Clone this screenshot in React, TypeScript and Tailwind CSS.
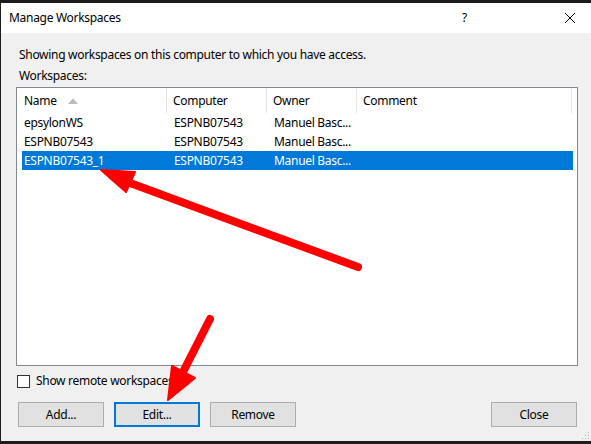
import React from "react";

const font = { fontFamily: '"Noto Sans", "Open Sans", sans-serif' };

function Row({ name, selected }: { name: string; selected?: boolean }) {
  return (
    <div
      className={`flex h-[19px] items-center ${selected ? "bg-[#0078d7] text-white" : "text-black"}`}
    >
      <div className="w-[146px] pl-[2px] whitespace-nowrap">{name}</div>
      <div className="w-[100px] pl-[6px] whitespace-nowrap">ESPNB07543</div>
      <div className="w-[90px] pl-[6px] whitespace-nowrap">Manuel Basc...</div>
      <div className="flex-1"></div>
    </div>
  );
}

function Btn({ label, def }: { label: string; def?: boolean }) {
  return (
    <div
      className={`flex h-[25px] w-[86px] items-center justify-center bg-[#e1e1e1] ${
        def ? "border-2 border-[#0078d7]" : "border border-[#adadad]"
      }`}
    >
      {label}
    </div>
  );
}

export default function App() {
  return (
    <div
      className="relative h-[444px] w-[591px] overflow-hidden bg-[#1b1b1b] pl-[1px] pt-[3px] text-[12px] leading-[16px] tracking-[-0.3px] text-black"
      style={font}
    >
      <div className="flex h-[438px] flex-col bg-[#f0f0f0]">
        {/* Title bar */}
        <div className="flex h-[30px] items-center bg-white pl-[8px]">
          <span className="flex-1">Manage Workspaces</span>
          <span className="mr-[98px] text-[12px]">?</span>
          <svg width="10" height="10" viewBox="0 0 10 10" className="mr-[16px]">
            <path d="M0 0 L10 10 M10 0 L0 10" stroke="#000" strokeWidth="1" />
          </svg>
        </div>
        {/* Body */}
        <div className="flex flex-1 flex-col px-[15px]">
          <div className="mt-[14px] pl-[3px]">Showing workspaces on this computer to which you have access.</div>
          <div className="mt-[5px] pl-[3px]">Workspaces:</div>
          {/* List */}
          <div className="mt-[3px] h-[279px] w-[562px] border border-[#828790] bg-white">
            <div className="flex h-[25px]">
              <div className="relative flex w-[150px] items-center border-r border-[#e5e5e5] pl-[7px]">
                Name
                <svg width="10" height="6" viewBox="0 0 10 6" className="absolute left-[51px] top-[10px]">
                  <path d="M0 6 L5 0.5 L10 6 Z" fill="#bcbcbc" />
                </svg>
              </div>
              <div className="flex w-[100px] items-center border-r border-[#e5e5e5] pl-[6px]">Computer</div>
              <div className="flex w-[90px] items-center border-r border-[#e5e5e5] pl-[6px]">Owner</div>
              <div className="flex w-[215px] items-center border-r border-[#e5e5e5] pl-[6px]">Comment</div>
            </div>
            <div className="w-[556px] pl-[5px]">
              <Row name="epsylonWS" />
              <Row name="ESPNB07543" />
              <Row name="ESPNB07543_1" selected />
            </div>
          </div>
          {/* checkbox */}
          <div className="mt-[7px] flex items-center pl-[1px]">
            <div className="h-[13px] w-[13px] border border-[#333] bg-white"></div>
            <span className="ml-[6px]">Show remote workspaces</span>
          </div>
          {/* buttons */}
          <div className="mt-[13px] flex items-center pl-[2px]">
            <Btn label="Add..." />
            <div className="ml-[10px]">
              <Btn label="Edit..." def />
            </div>
            <div className="ml-[10px]">
              <Btn label="Remove" />
            </div>
            <div className="flex-1"></div>
            <div className="mr-[-1px]">
              <Btn label="Close" />
            </div>
          </div>
        </div>
      </div>
      {/* resize grip */}
      <svg width="8" height="8" viewBox="0 0 8 8" className="absolute left-[582px] top-[432px]">
        <rect x="6" y="0" width="1" height="1" fill="#b0b0b0" />
        <rect x="3" y="3" width="1" height="1" fill="#b0b0b0" />
        <rect x="6" y="3" width="1" height="1" fill="#b0b0b0" />
        <rect x="0" y="6" width="1" height="1" fill="#b0b0b0" />
        <rect x="3" y="6" width="1" height="1" fill="#b0b0b0" />
        <rect x="6" y="6" width="1" height="1" fill="#b0b0b0" />
      </svg>
      {/* red annotation arrows */}
      <svg width="591" height="444" className="pointer-events-none absolute left-0 top-0">
        <path d="M358 267 L122 180" stroke="#ff0000" strokeWidth="8" strokeLinecap="round" />
        <path d="M101 170 L135 172 L126 192 Z" fill="#ff0000" stroke="#ff0000" strokeWidth="2" strokeLinejoin="round" />
        <path d="M210 319 L183 372" stroke="#ff0000" strokeWidth="8" strokeLinecap="round" />
        <path d="M168 400 L172 366 L195 378 Z" fill="#ff0000" stroke="#ff0000" strokeWidth="2" strokeLinejoin="round" />
      </svg>
    </div>
  );
}
